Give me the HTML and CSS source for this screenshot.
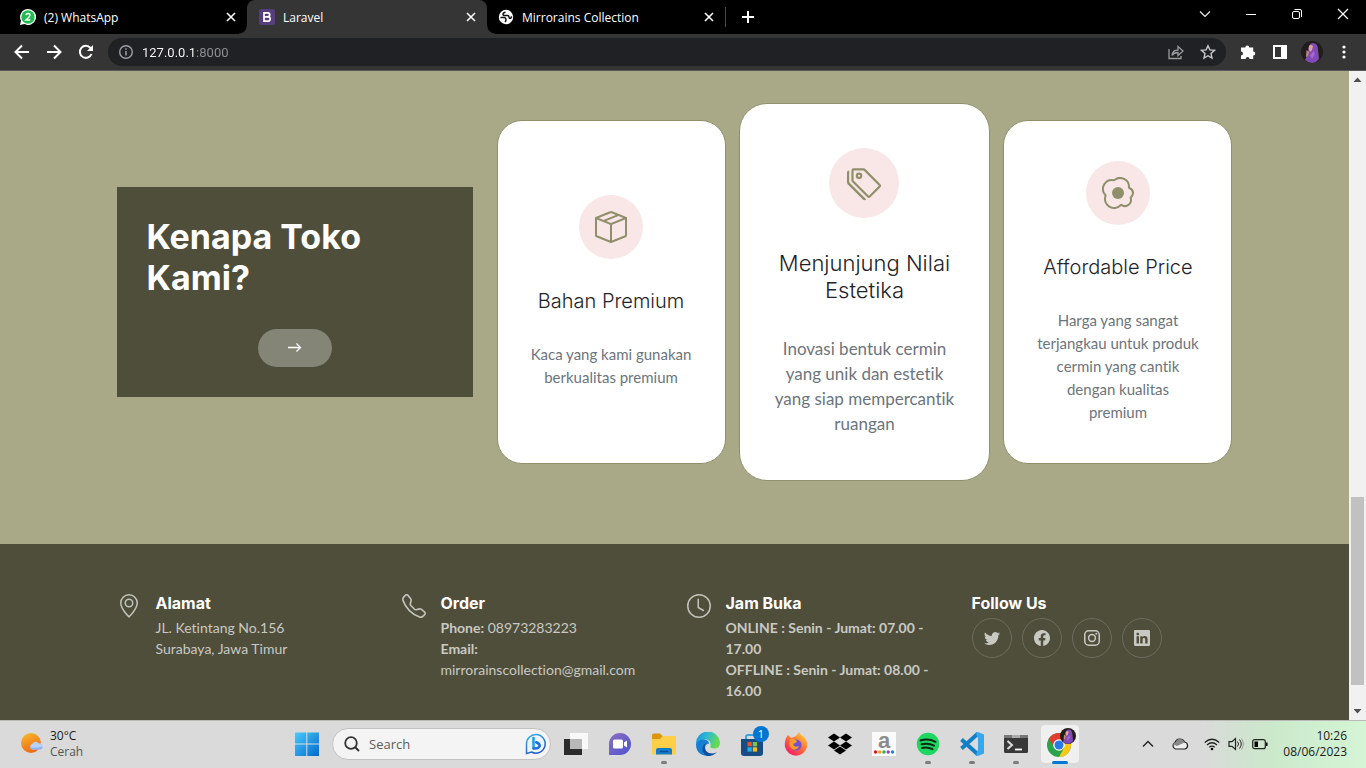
FILE: index.html
```html
<!DOCTYPE html>
<html lang="id">
<head>
<meta charset="utf-8">
<meta name="viewport" content="width=device-width, initial-scale=1">
<title>Laravel</title>
<link rel="stylesheet" href="styles.css">
</head>
<body>
<svg class="defs" width="0" height="0" aria-hidden="true">
  <defs>
    <symbol id="close" viewBox="0 0 16 16"><path d="M4 4l8 8M12 4l-8 8" fill="none" stroke="currentColor" stroke-width="1.6"/></symbol>
    <symbol id="avatar" viewBox="0 0 22 22">
      <circle cx="11" cy="11" r="11" fill="#211d1a"/>
      <path d="M4 19q2-4 3-8 0-9 5-9t5 7l1 9q-3 4-7 4-4 0-7-3z" fill="#8149b3"/>
      <path d="M8 5q2-2 4 0l-1 4-2 2q-2-3-1-6z" fill="#dba892"/>
      <path d="M5.500 9l2.500 2-1 4-2 1z" fill="#c08a78"/>
      <path d="M9 14l4-4 1 3-3 5z" fill="#a467d2"/>
    </symbol>
  </defs>
</svg>

<header class="browser">
  <div class="tabs">
    <div class="tab">
      <svg class="favicon" viewBox="0 0 16 16"><path d="M8 0a8 8 0 1 1-3.6 15.100L0 16l1-4.200A8 8 0 0 1 8 0z" fill="#fff"/><circle cx="8" cy="8" r="6.700" fill="#1fbd51"/><path d="M6 6.200q.3-1.700 2.100-1.700t1.900 1.600q0 1-1.200 2.100L6 11h4.300" fill="none" stroke="#fff" stroke-width="1.500"/></svg>
      <span class="tab-title">(2) WhatsApp</span>
      <button class="icon-btn" aria-label="Close tab"><svg width="16" height="16"><use href="#close"/></svg></button>
    </div>
    <div class="tab tab-active">
      <svg class="favicon" viewBox="0 0 16 16"><rect width="16" height="16" rx="2.500" fill="#563d7c"/><path d="M5 3.800h3.700a2 2 0 0 1 0 4H5h4a2.200 2.200 0 0 1 0 4.400H5z" fill="none" stroke="#fff" stroke-width="1.700"/></svg>
      <span class="tab-title">Laravel</span>
      <button class="icon-btn" aria-label="Close tab"><svg width="16" height="16"><use href="#close"/></svg></button>
    </div>
    <div class="tab">
      <svg class="favicon" viewBox="0 0 16 16"><circle cx="8" cy="8" r="7.200" fill="#fff"/><path d="M7.500 3.200q-2.500.3-2.500 2 0 1.300 2 1.300h2.500q1.500 0 1.500 1.500t1.700 1.300l1-2" fill="none" stroke="#111" stroke-width="1.500"/><path d="M2.500 8.500h4q1.500.3 1.500 2 0 1.500-1 2.500" fill="none" stroke="#111" stroke-width="1.500"/></svg>
      <span class="tab-title">Mirrorains Collection</span>
      <button class="icon-btn" aria-label="Close tab"><svg width="16" height="16"><use href="#close"/></svg></button>
    </div>
    <span class="tab-divider"></span>
    <button class="new-tab" aria-label="New tab"><svg width="16" height="16" viewBox="0 0 16 16"><path d="M8 2v12M2 8h12" stroke="#fff" stroke-width="2"/></svg></button>
    <div class="window-buttons">
      <button aria-label="Search tabs"><svg width="12" height="12" viewBox="0 0 12 12"><path d="M1 3.500l5 5 5-5" fill="none" stroke="#eee" stroke-width="1.200"/></svg></button>
      <button aria-label="Minimize"><svg width="12" height="12" viewBox="0 0 12 12"><path d="M1 6.500h10" stroke="#fff"/></svg></button>
      <button aria-label="Restore"><svg width="12" height="12" viewBox="0 0 12 12"><rect x="1.500" y="3.500" width="7" height="7" rx="1.500" fill="none" stroke="#fff"/><path d="M3.500 1.500H9A1.500 1.500 0 0 1 10.500 3v6" fill="none" stroke="#fff"/></svg></button>
      <button aria-label="Close"><svg width="12" height="12" viewBox="0 0 12 12"><path d="M1 1l10 10M11 1L1 11" stroke="#fff" stroke-width="1.200"/></svg></button>
    </div>
  </div>
  <div class="toolbar">
    <button class="nav-btn" aria-label="Back"><svg width="16" height="16" viewBox="0 0 16 16"><path d="M15 8H2M8 1.500L1.500 8 8 14.500" fill="none" stroke="#fff" stroke-width="2"/></svg></button>
    <button class="nav-btn" aria-label="Forward"><svg width="16" height="16" viewBox="0 0 16 16"><path d="M1 8h13M8 1.500L14.500 8 8 14.500" fill="none" stroke="#fff" stroke-width="2"/></svg></button>
    <button class="nav-btn" aria-label="Reload"><svg width="16" height="16" viewBox="0 0 16 16"><path d="M13.500 10A6 6 0 1 1 12.500 4" fill="none" stroke="#fff" stroke-width="2"/><path d="M15 1v6H9z" fill="#fff"/></svg></button>
    <div class="omnibox">
      <svg width="16" height="16" viewBox="0 0 16 16"><circle cx="8" cy="8" r="6.300" fill="none" stroke="#9aa0a6" stroke-width="1.400"/><path d="M8 7v4.500M8 4.300v1.500" stroke="#9aa0a6" stroke-width="1.500"/></svg>
      <input class="url" type="text" aria-label="Address" value="127.0.0.1:8000">
      <button class="icon-btn" aria-label="Share"><svg width="16" height="16" viewBox="0 0 16 16"><path d="M1 5v9.500h12V12" fill="none" stroke="#9a9b9d" stroke-width="1.300"/><path d="M4 11.500q.5-5.500 6-5.500V2.500L15 7l-5 4.500V8.500q-4 0-6 3z" fill="none" stroke="#9a9b9d" stroke-width="1.300"/></svg></button>
      <button class="icon-btn" aria-label="Bookmark"><svg width="16" height="16" viewBox="0 0 16 16"><path d="M8 1.700l1.900 4.200 4.500.5-3.400 3.100 1 4.500L8 11.700 4 14l1-4.500-3.400-3.100 4.500-.5z" fill="none" stroke="#c6c7c8" stroke-width="1.400"/></svg></button>
    </div>
    <button class="tool-btn" aria-label="Extensions"><svg width="16" height="16" viewBox="0 0 16 16"><path d="M1 3.500h4.300a2 2 0 0 1 4 0h3.900v4a2 2 0 0 1 0 4V15H9.600a2 2 0 0 0-4 0H1v-3.600a2 2 0 0 0 0-4z" fill="#fff"/></svg></button>
    <button class="tool-btn" aria-label="Side panel"><svg width="16" height="16" viewBox="0 0 16 16"><path d="M1 1h14v14H1zM3 3v10h6V3z" fill="#fff" fill-rule="evenodd"/></svg></button>
    <button class="tool-btn" aria-label="Profile"><svg width="22" height="22"><use href="#avatar"/></svg></button>
    <button class="tool-btn" aria-label="Menu"><svg width="16" height="16" viewBox="0 0 16 16"><g fill="#fff"><circle cx="8" cy="3" r="1.600"/><circle cx="8" cy="8" r="1.600"/><circle cx="8" cy="13" r="1.600"/></g></svg></button>
  </div>
</header>

<div class="viewport">
  <div class="page">
    <main class="why">
      <div class="container why-row">
        <section class="why-box">
          <h3>Kenapa Toko Kami?</h3>
          <a class="more-btn" href="#" aria-label="Selengkapnya"><svg width="14" height="14" viewBox="0 0 14 14"><path d="M0 6.500h12M8.500 2.500l4 4-4 4" fill="none" stroke="#fff" stroke-width="1.300"/></svg></a>
        </section>
        <div class="cards">
          <article class="card">
            <span class="card-icon"><svg viewBox="0 0 16 16"><path d="M8.186 1.113a.5.5 0 0 0-.372 0L1.846 3.500l2.404.961L10.404 2l-2.218-.887zm3.564 1.426L5.596 5 8 5.961 14.154 3.500l-2.404-.961zm3.250 1.700-6.500 2.600v7.922l6.500-2.600V4.240zM7.500 14.762V6.838L1 4.239v7.923l6.500 2.600zM7.443.184a1.500 1.500 0 0 1 1.114 0l7.129 2.852A.5.5 0 0 1 16 3.500v8.662a1 1 0 0 1-.629.928l-7.185 2.874a.5.5 0 0 1-.372 0L.63 13.090a1 1 0 0 1-.63-.928V3.500a.5.5 0 0 1 .314-.464L7.443.184z"/></svg></span>
            <h4>Bahan Premium</h4>
            <p>Kaca yang kami gunakan berkualitas premium</p>
          </article>
          <article class="card card-large">
            <span class="card-icon"><svg viewBox="0 0 16 16"><path d="M3 2v4.586l7 7L14.586 9l-7-7H3zM2 2a1 1 0 0 1 1-1h4.586a1 1 0 0 1 .707.293l7 7a1 1 0 0 1 0 1.414l-4.586 4.586a1 1 0 0 1-1.414 0l-7-7A1 1 0 0 1 2 6.586V2z"/><path d="M5.500 5a.5.5 0 1 1 0-1 .5.5 0 0 1 0 1zm0 1a1.500 1.500 0 1 0 0-3 1.500 1.500 0 0 0 0 3zM1 7.086a1 1 0 0 0 .293.707L8.750 15.250l-.043.043a1 1 0 0 1-1.414 0l-7-7A1 1 0 0 1 0 7.586V3a1 1 0 0 1 1-1v5.086z"/></svg></span>
            <h4>Menjunjung Nilai Estetika</h4>
            <p>Inovasi bentuk cermin yang unik dan estetik yang siap mempercantik ruangan</p>
          </article>
          <article class="card">
            <span class="card-icon"><svg viewBox="0 0 16 16"><path d="M8 11a3 3 0 1 0 0-6 3 3 0 0 0 0 6z"/><path d="M13.997 5.170a5 5 0 0 0-8.101-4.090A5 5 0 0 0 1.280 9.342a5 5 0 0 0 8.336 5.109 3.500 3.500 0 0 0 5.201-4.065 3.001 3.001 0 0 0-.822-5.216zm-1-.034a1 1 0 0 0 .668.977 2.001 2.001 0 0 1 .547 3.478 1 1 0 0 0-.341 1.113 2.500 2.500 0 0 1-3.715 2.905 1 1 0 0 0-1.262.152 4 4 0 0 1-6.670-4.087 1 1 0 0 0-.2-1 4 4 0 0 1 3.693-6.610 1 1 0 0 0 .8-.2 4 4 0 0 1 6.480 3.273z"/></svg></span>
            <h4>Affordable Price</h4>
            <p>Harga yang sangat terjangkau untuk produk cermin yang cantik dengan kualitas<br>premium</p>
          </article>
        </div>
      </div>
    </main>
    <footer class="footer">
      <div class="container footer-grid">
        <section class="info">
          <svg class="info-icon" viewBox="0 0 16 16"><path d="M12.166 8.940c-.524 1.062-1.234 2.120-1.960 3.070A31.493 31.493 0 0 1 8 14.580a31.481 31.481 0 0 1-2.206-2.570c-.726-.95-1.436-2.008-1.960-3.070C3.304 7.867 3 6.862 3 6a5 5 0 0 1 10 0c0 .862-.305 1.867-.834 2.940zM8 16s6-5.686 6-10A6 6 0 0 0 2 6c0 4.314 6 10 6 10z"/><path d="M8 8a2 2 0 1 1 0-4 2 2 0 0 1 0 4zm0 1a3 3 0 1 0 0-6 3 3 0 0 0 0 6z"/></svg>
          <div><h4>Alamat</h4><p>JL. Ketintang No.156<br>Surabaya, Jawa Timur</p></div>
        </section>
        <section class="info">
          <svg class="info-icon" viewBox="0 0 16 16"><path d="M3.654 1.328a.678.678 0 0 0-1.015-.063L1.605 2.300c-.483.484-.661 1.169-.45 1.770a17.568 17.568 0 0 0 4.168 6.608 17.569 17.569 0 0 0 6.608 4.168c.601.211 1.286.033 1.770-.45l1.034-1.034a.678.678 0 0 0-.063-1.015l-2.307-1.794a.678.678 0 0 0-.58-.122l-2.190.547a1.745 1.745 0 0 1-1.657-.459L5.482 8.062a1.745 1.745 0 0 1-.46-1.657l.548-2.190a.678.678 0 0 0-.122-.58L3.654 1.328zM1.884.511a1.745 1.745 0 0 1 2.612.163L6.290 2.980c.329.423.445.974.315 1.494l-.547 2.190a.678.678 0 0 0 .178.643l2.457 2.457a.678.678 0 0 0 .644.178l2.189-.547a1.745 1.745 0 0 1 1.494.315l2.306 1.794c.829.645.905 1.870.163 2.611l-1.034 1.034c-.74.74-1.846 1.065-2.877.702a18.634 18.634 0 0 1-7.010-4.420 18.634 18.634 0 0 1-4.420-7.009c-.362-1.030-.037-2.137.703-2.877L1.885.511z"/></svg>
          <div><h4>Order</h4><p><strong>Phone:</strong> 08973283223<br><strong>Email:</strong><br>mirrorainscollection@gmail.com</p></div>
        </section>
        <section class="info">
          <svg class="info-icon" viewBox="0 0 16 16"><path d="M8 3.500a.5.5 0 0 0-1 0V9a.5.5 0 0 0 .252.434l3.500 2a.5.5 0 0 0 .496-.868L8 8.710V3.500z"/><path d="M8 16A8 8 0 1 0 8 0a8 8 0 0 0 0 16zm7-8A7 7 0 1 1 1 8a7 7 0 0 1 14 0z"/></svg>
          <div><h4>Jam Buka</h4><p><strong>ONLINE : Senin - Jumat: 07.00 -<br>17.00<br>OFFLINE : Senin - Jumat: 08.00 -<br>16.00</strong></p></div>
        </section>
        <section>
          <h4>Follow Us</h4>
          <nav class="social">
            <a href="#" aria-label="Twitter"><svg viewBox="0 0 16 16"><path d="M5.026 15c6.038 0 9.341-5.003 9.341-9.334 0-.14 0-.282-.006-.422A6.685 6.685 0 0 0 16 3.542a6.658 6.658 0 0 1-1.889.518 3.301 3.301 0 0 0 1.447-1.817 6.533 6.533 0 0 1-2.087.793A3.286 3.286 0 0 0 7.875 6.030a9.325 9.325 0 0 1-6.767-3.429 3.289 3.289 0 0 0 1.018 4.382A3.323 3.323 0 0 1 .64 6.575v.045a3.288 3.288 0 0 0 2.632 3.218 3.203 3.203 0 0 1-.865.115 3.230 3.230 0 0 1-.614-.057 3.283 3.283 0 0 0 3.067 2.277A6.588 6.588 0 0 1 .78 13.580a6.320 6.320 0 0 1-.78-.045A9.344 9.344 0 0 0 5.026 15z"/></svg></a>
            <a href="#" aria-label="Facebook"><svg viewBox="0 0 16 16"><path d="M16 8.049c0-4.446-3.582-8.050-8-8.050C3.580 0-.002 3.603-.002 8.050c0 4.017 2.926 7.347 6.750 7.951v-5.625h-2.030V8.050H6.750V6.275c0-2.017 1.195-3.131 3.022-3.131.876 0 1.791.157 1.791.157v1.980h-1.009c-.993 0-1.303.621-1.303 1.258v1.510h2.218l-.354 2.326H9.250V16c3.824-.604 6.750-3.934 6.750-7.951z"/></svg></a>
            <a href="#" aria-label="Instagram"><svg viewBox="0 0 16 16"><g fill="none" stroke="currentColor" stroke-width="1.500"><rect x=".75" y=".75" width="14.500" height="14.500" rx="4"/><circle cx="8" cy="8" r="3.400"/></g><circle cx="12.300" cy="3.700" r="1"/></svg></a>
            <a href="#" aria-label="LinkedIn"><svg viewBox="0 0 16 16"><path d="M0 1.146C0 .513.526 0 1.175 0h13.650C15.474 0 16 .513 16 1.146v13.708c0 .633-.526 1.146-1.175 1.146H1.175C.526 16 0 15.487 0 14.854V1.146zm4.943 12.248V6.169H2.542v7.225h2.401zm-1.200-8.212c.837 0 1.358-.554 1.358-1.248-.015-.709-.52-1.248-1.342-1.248-.822 0-1.359.54-1.359 1.248 0 .694.521 1.248 1.327 1.248h.016zm4.908 8.212V9.359c0-.216.016-.432.08-.586.173-.431.568-.878 1.232-.878.869 0 1.216.662 1.216 1.634v3.865h2.401V9.250c0-2.220-1.184-3.252-2.764-3.252-1.274 0-1.845.7-2.165 1.193v.025V6.169h-2.400c.03.678 0 7.225 0 7.225h2.400z"/></svg></a>
          </nav>
        </section>
      </div>
    </footer>
  </div>
  <div class="scrollbar" aria-hidden="true">
    <svg width="17" height="17" viewBox="0 0 17 17"><path d="M4.500 11l4-4.500 4 4.500z" fill="#505050"/></svg>
    <div class="track"><div class="thumb"></div></div>
    <svg width="17" height="17" viewBox="0 0 17 17"><path d="M4.500 6l4 4.500 4-4.500z" fill="#505050"/></svg>
  </div>
</div>

<div class="taskbar">
  <div class="weather">
    <svg width="24" height="24" viewBox="0 0 24 24"><defs><linearGradient id="sun" x2="0.400" y2="1"><stop stop-color="#f6bd2e"/><stop offset="1" stop-color="#f06c12"/></linearGradient></defs><circle cx="11" cy="11" r="10" fill="url(#sun)"/><path d="M12 17.500a3 3 0 0 1 0-5.500 4 4 0 0 1 7-.5 3 3 0 0 1 1.500 6z" fill="#b9d0fb"/><path d="M9.500 15.500q1 2 3 2h8q2.500-1 2-3-2 1.500-13 1z" fill="#8fb2f4"/></svg>
    <div class="weather-text"><span>30°C</span><span class="muted">Cerah</span></div>
  </div>
  <div class="dock">
    <button class="app" aria-label="Start"><svg width="24" height="24" viewBox="0 0 24 24"><defs><linearGradient id="win" gradientUnits="userSpaceOnUse" x1="0" y1="0" x2="24" y2="24"><stop stop-color="#4ccbfb"/><stop offset="1" stop-color="#0169ce"/></linearGradient></defs><path d="M0 .5h11.300v11H0zM12.300.5H24v11H12.300zM0 12.500h11.300V24H0zM12.300 12.500H24V24H12.300z" fill="url(#win)"/></svg></button>
    <label class="search">
      <svg width="18" height="18" viewBox="0 0 18 18"><circle cx="8" cy="8" r="5.800" fill="none" stroke="#333" stroke-width="1.800"/><path d="M12.200 12.200L16 16" stroke="#333" stroke-width="2"/></svg>
      <input type="text" placeholder="Search" aria-label="Search">
      <svg width="22" height="22" viewBox="0 0 22 22"><defs><linearGradient id="bing" x2="0.600" y2="1"><stop stop-color="#38b6ea"/><stop offset="1" stop-color="#1f55bf"/></linearGradient></defs><path d="M11 1.500a9.300 9.300 0 1 1-4.500 17.500L1.500 20.500V11A9.300 9.300 0 0 1 11 1.500z" fill="#eef6fd" stroke="url(#bing)" stroke-width="1.500"/><path d="M8.500 5v10.300" stroke="#25a0e8" stroke-width="2.600" stroke-linecap="round"/><path d="M8.700 15.500q4.500.5 6-2.500.3-2-3.500-3.700" fill="none" stroke="#1f70dc" stroke-width="2.600" stroke-linecap="round"/></svg>
    </label>
    <button class="app" aria-label="Task view"><svg width="24" height="24" viewBox="0 0 24 24"><path d="M0 7h18v16H0z" fill="#2c2c2c"/><path d="M6 1h18v16H6z" fill="#f8f8f8"/><path d="M6 7h12v10H6z" fill="#b8b8b8"/></svg></button>
    <button class="app" aria-label="Chat"><svg width="24" height="24" viewBox="0 0 24 24"><defs><linearGradient id="chat" x2="1" y2="1"><stop stop-color="#8d70c0"/><stop offset="1" stop-color="#4d51d0"/></linearGradient></defs><path d="M12 1a11 11 0 1 1 0 22H1V12A11 11 0 0 1 12 1z" fill="url(#chat)"/><rect x="5" y="7.500" width="10" height="9" rx="1.500" fill="#fff"/><path d="M16 10.500l3-2v7l-3-2z" fill="#fff"/></svg></button>
    <button class="app running" aria-label="File Explorer"><svg width="24" height="24" viewBox="0 0 24 24"><path d="M0 3a1.500 1.500 0 0 1 1.500-1.500H8l2.500 2.500v5H0z" fill="#dd9609"/><path d="M0 7h8l3-3h13v18.500H0z" fill="#fdcf48"/><path d="M4 22.500V18a2 2 0 0 1 2-2h12a2 2 0 0 1 2 2v4.500z" fill="#147bcb"/><path d="M8 19.500h8" stroke="#07509b" stroke-width="1.500"/></svg></button>
    <button class="app" aria-label="Edge"><svg width="24" height="24" viewBox="0 0 24 24"><defs><linearGradient id="edge" x2="1" y2="0.300"><stop stop-color="#1b8fdc"/><stop offset=".5" stop-color="#2fb9d3"/><stop offset="1" stop-color="#66dc50"/></linearGradient></defs><path d="M0 12A12 12 0 0 1 24 11q0 5.500-6 5.500-4.500 0-3.500-2.500 1-5-4-6.500Q4 6.500 0 12z" fill="url(#edge)"/><path d="M0 12Q3 6.500 9 7.500q4 1 4 4-4 .5-4 5 1 5 8 5.500-3 2-6 1.900Q0 23 0 12z" fill="#177fd3"/><path d="M10 11q-3 5 1 9 4 3 10 .3-4 4-9.500 3.600Q6 22 6.500 16 7 12.500 10 11z" fill="#114f9c"/></svg></button>
    <button class="app" aria-label="Microsoft Store"><svg width="30" height="30" viewBox="0 0 30 30"><path d="M9 11V8q0-2 2-2h8q2 0 2 2v3" fill="none" stroke="#39a4df" stroke-width="2"/><path d="M4 10h22v14a3 3 0 0 1-3 3H7a3 3 0 0 1-3-3z" fill="#174d84"/><path d="M10.500 13h4.300v4.300h-4.300z" fill="#f05228"/><path d="M15.800 13h4.300v4.300h-4.300z" fill="#80c244"/><path d="M10.500 18.300h4.300v4.300h-4.300z" fill="#20aeea"/><path d="M15.800 18.300h4.300v4.300h-4.300z" fill="#fcba16"/></svg><span class="badge">1</span></button>
    <button class="app" aria-label="Firefox"><svg width="24" height="24" viewBox="0 0 24 24"><defs><linearGradient id="fox" x1="1" y1="0" x2="0.200" y2="1"><stop stop-color="#ffe33c"/><stop offset=".5" stop-color="#ff7634"/><stop offset="1" stop-color="#f5156c"/></linearGradient></defs><path d="M4 3l3 3 3-1q3-1 5-5 2 4 5 5 4 4 3 10a11.300 11.300 0 0 1-22 0Q0 8 4 3z" fill="url(#fox)"/><circle cx="12" cy="13" r="5.500" fill="#7451d3"/><path d="M6 7q5-1 7 3l-4 2q1 4 6 2-2 5-7 3-4-3-2-10z" fill="#ff9c29"/></svg></button>
    <button class="app" aria-label="Dropbox"><svg width="24" height="24" viewBox="0 0 24 24"><path d="M6 1.500l6 4-6 4-6-4zM18 1.500l6 4-6 4-6-4zM6 9.500l6 4-6 4-6-4zM18 9.500l6 4-6 4-6-4zM12 14.500l6 4-6 4-6-4z"/></svg></button>
    <button class="app" aria-label="Amazon"><span class="amazon"><span class="letter">a</span><svg width="24" height="4" viewBox="0 0 24 4"><circle cx="3.500" cy="2" r="1.700" fill="#e8141c"/><circle cx="7.800" cy="2" r="1.700" fill="#f59a19"/><circle cx="12" cy="2" r="1.700" fill="#3aaa48"/><circle cx="16.200" cy="2" r="1.700" fill="#8b43c9"/><circle cx="20.500" cy="2" r="1.700" fill="#1684e0"/></svg></span></button>
    <button class="app running" aria-label="Spotify"><svg width="24" height="24" viewBox="0 0 24 24"><circle cx="12" cy="12" r="11.200" fill="#1ed760"/><path d="M4.500 8.500q8-2.300 15 1.300M5.500 12.300q7-1.800 12.500 1.300M6 16q5.500-1.300 10.500 1.200" fill="none" stroke="#102616" stroke-width="2" stroke-linecap="round"/></svg></button>
    <button class="app running" aria-label="VS Code"><svg width="24" height="24" viewBox="0 0 24 24"><path d="M1.500 16.500L18 1.500M1.500 7.500L18 22.500" stroke="#137fc7" stroke-width="4"/><path d="M18 0l6 2.500v19L18 24l-2-2 2-4V6l-2-4z" fill="#36a9ee"/></svg></button>
    <button class="app running" aria-label="Terminal"><svg width="24" height="24" viewBox="0 0 24 24"><path d="M0 4.500Q0 3 1.500 3h21Q24 3 24 4.500v15q0 1.500-1.500 1.500h-21Q0 21 0 19.500z" fill="#383838"/><path d="M0 6V3h8v3zM16 6V3h8v3z" fill="#777"/><path d="M8 3h8v3H8z" fill="#aaa"/><path d="M3.500 9l4.500 4-4.500 4" fill="none" stroke="#ddd" stroke-width="2"/><path d="M11 17.500h7" stroke="#fff" stroke-width="1.800"/></svg></button>
    <button class="app active" aria-label="Chrome"><svg width="32" height="32" viewBox="0 0 32 32"><circle cx="15" cy="17" r="12" fill="#2ba24c"/><path d="M4.600 11A12 12 0 0 1 25.400 11L15 12 11 20z" fill="#e33b2e"/><path d="M25.400 11A12 12 0 0 1 15 29l5-9-2-9z" fill="#fdc814"/><circle cx="15" cy="17" r="5.800" fill="#fff"/><circle cx="15" cy="17" r="4.500" fill="#267be9"/><svg x="16" width="16" height="16"><use href="#avatar"/></svg></svg></button>
  </div>
  <div class="tray">
    <svg width="12" height="12" viewBox="0 0 12 12"><path d="M1 8.500l5-5 5 5" fill="none" stroke="#222" stroke-width="1.400"/></svg>
    <svg class="cloud" width="18" height="16" viewBox="0 0 18 16"><path d="M4.500 13a3.500 3.500 0 0 1-.5-6.500 5.200 5.200 0 0 1 9.500-.5 3.600 3.600 0 0 1 .5 7z" fill="#eee" stroke="#222" stroke-width="1.200"/><path d="M2 8.500Q2 6.500 4.500 6.500 6 2.500 9 3q3.500 0 4.500 3.500L6 10z" fill="#888"/></svg>
    <svg width="16" height="16" viewBox="0 0 16 16"><g fill="none" stroke="#222" stroke-width="1.200"><path d="M.7 6.500q7.300-6.500 14.600 0M3 9q5-4.500 10 0M5.300 11.300q2.700-2.500 5.400 0"/></g><circle cx="8" cy="13" r="1.300"/></svg>
    <svg width="16" height="16" viewBox="0 0 16 16"><path d="M1 5.700h3L7.500 2.500v11L4 10.300H1z" fill="none" stroke="#222" stroke-width="1.200"/><path d="M9.500 5.500q2 2.500 0 5M11.500 3.500q3.500 4.500 0 9" fill="none" stroke="#222"/><path d="M13.500 2.500q3.500 5.500 0 11" fill="none" stroke="#999"/></svg>
    <svg width="16" height="16" viewBox="0 0 16 16"><rect x=".7" y="3.700" width="12.600" height="9" rx="2" fill="none" stroke="#222" stroke-width="1.200"/><path d="M2.500 5.500H6V11H2.500zM14 6.500h1.500v3.500H14z"/></svg>
    <div class="clock"><span>10:26</span><span>08/06/2023</span></div>
  </div>
</div>
</body>
</html>
```
FILE: styles.css
```css
* { box-sizing: border-box; }

body {
  margin: 0;
  height: 100vh;
  display: flex;
  flex-direction: column;
  overflow: hidden;
  font-family: "Open Sans", "Noto Sans", sans-serif;
}

h3, h4, p { margin: 0; }
svg { display: block; flex: none; }
.defs { position: absolute; }

button {
  display: flex;
  align-items: center;
  justify-content: center;
  padding: 0;
  border: 0;
  background: none;
  color: inherit;
  font: inherit;
}

/* Browser frame */
.browser { background: #353535; color: #fff; border-bottom: 1px solid #5a5a58; }
.tabs { display: flex; height: 34px; background: #000; }
.tab {
  display: flex;
  align-items: center;
  gap: 8px;
  width: 240px;
  padding: 0 8px 0 12px;
  font-size: 12px;
}
.tab:first-child { width: 247px; padding-left: 20px; }
.tab:nth-child(3) { width: 238px; padding-left: 11px; }
.tab-active { position: relative; background: #353535; border-radius: 8px 8px 0 0; }
.tab-active::before,
.tab-active::after {
  content: "";
  position: absolute;
  bottom: 0;
  width: 8px;
  height: 8px;
}
.tab-active::before { right: 100%; background: radial-gradient(circle at 0 0, #000 7px, #353535 8px); }
.tab-active::after { left: 100%; background: radial-gradient(circle at 100% 0, #000 7px, #353535 8px); }
.tab-title { flex: 1; white-space: nowrap; }
.favicon { width: 16px; height: 16px; }
.tab-divider { align-self: center; width: 1px; height: 20px; background: #4a4a4a; }
.new-tab { width: 44px; }
.window-buttons { display: flex; margin-left: auto; height: 28px; }
.window-buttons button { width: 46px; }

.toolbar { display: flex; align-items: center; height: 36px; padding: 0 6px; }
.nav-btn, .tool-btn { width: 32px; height: 32px; }
.omnibox {
  display: flex;
  align-items: center;
  gap: 8px;
  flex: 1;
  height: 28px;
  margin: 0 6px;
  padding: 0 10px;
  border-radius: 14px;
  background: #202124;
}
.omnibox .icon-btn { margin-left: 8px; }
.url {
  flex: 1;
  min-width: 0;
  padding: 0;
  border: 0;
  outline: 0;
  font: 13px Roboto, sans-serif;
  color: transparent;
  background: linear-gradient(90deg, #fff 53px, #8f9194 53px);
  background-clip: text;
  -webkit-background-clip: text;
}

/* Page area */
.viewport { display: flex; flex: 1; min-height: 0; }
.page {
  display: flex;
  flex-direction: column;
  flex: 1;
  min-width: 0;
  overflow: hidden;
  background: #4e4e3b;
  font-family: Lato, sans-serif;
  font-variant-ligatures: none;
}
.container { width: 100%; max-width: 1116px; margin: 0 auto; }
.why { padding: 32px 0 63px; background: #a9a988; }
.why-row { display: grid; grid-template-columns: 356px 1fr; gap: 24px; align-items: center; }
.why-box {
  display: flex;
  flex-direction: column;
  align-items: center;
  gap: 31px;
  padding: 29px 30px 30px;
  background: #4e4e3b;
  color: #fff;
}
.why-box h3 { align-self: stretch; font: 700 34px/41px Inter, sans-serif; }
.more-btn {
  display: flex;
  align-items: center;
  justify-content: center;
  width: 74px;
  height: 38px;
  border-radius: 19px;
  background: #848477;
}

.cards { display: grid; grid-template-columns: 10fr 11fr 10fr; gap: 13px; }
.card {
  display: flex;
  flex-direction: column;
  align-items: center;
  justify-content: center;
  gap: 30px;
  margin: 17px 0;
  padding: 30px;
  border: 1px solid #8f8f6b;
  border-radius: 25px;
  background: #fff;
  text-align: center;
}
.card-icon {
  display: flex;
  align-items: center;
  justify-content: center;
  width: 64px;
  height: 64px;
  border-radius: 50%;
  background: #f9e7e7;
  fill: #8f8f6b;
}
.card-icon svg { width: 32px; height: 32px; }
.card h4 { font: 300 20px/24px Inter, sans-serif; color: #1e2428; }
.card p { font-size: 15px; line-height: 23px; color: #6c757d; }
.card-large { gap: 32px; margin: 0; padding: 44px 30px; border-radius: 28px; }
.card-large .card-icon { width: 70px; height: 70px; }
.card-large .card-icon svg { width: 35px; height: 35px; }
.card-large h4 { font-size: 22px; line-height: 27px; }
.card-large p { font-size: 17px; line-height: 25px; }

.footer { padding-top: 49px; color: #c9c9c4; }
.footer-grid { display: grid; grid-template-columns: repeat(3, 285px) 1fr; }
.info { display: flex; gap: 15px; }
.info-icon { width: 24px; height: 24px; margin-top: 1px; fill: #c3c3bd; }
.footer h4 { font: 700 16px/20px Inter, sans-serif; color: #fff; }
.footer p { margin-top: 4px; font-size: 14px; line-height: 21px; }
.social { display: flex; gap: 10px; margin-top: 5px; }
.social a {
  display: flex;
  align-items: center;
  justify-content: center;
  width: 40px;
  height: 40px;
  border: 1px solid #6d6d5e;
  border-radius: 50%;
  color: #c9c9c4;
  fill: currentColor;
}
.social svg { width: 16px; height: 16px; }

.scrollbar { display: flex; flex-direction: column; width: 17px; background: #f1f1f1; }
.track { display: flex; flex: 1; flex-direction: column; justify-content: flex-end; padding: 0 2px 18px; }
.thumb { height: 31.5%; background: #c1c1c1; }

/* Taskbar */
.taskbar {
  display: grid;
  grid-template-columns: 1fr auto 1fr;
  align-items: center;
  height: 48px;
  padding-bottom: 1px;
  border-top: 1px solid #b9b9b5;
  background: linear-gradient(90deg, #dadada 88%, #cbe8cb 93%, #d5f5d6 100%);
  font-size: 12px;
  color: #1b1b1b;
}
.weather { display: flex; align-items: center; gap: 6px; padding-left: 20px; }
.weather-text, .clock { display: flex; flex-direction: column; line-height: 16px; }
.muted { color: #555; }
.dock { display: flex; align-items: center; padding-left: 1px; }
.app { position: relative; width: 44px; height: 46px; }
.search {
  display: flex;
  align-items: center;
  gap: 8px;
  width: 219px;
  height: 32px;
  margin: 0 3px;
  padding: 0 3px 0 10px;
  border: 1px solid #c2c2c2;
  border-radius: 16px;
  background: #f4f4f4;
}
.search input {
  flex: 1;
  min-width: 0;
  padding: 0;
  border: 0;
  outline: 0;
  background: none;
  font: 13px "Open Sans", sans-serif;
}
.search input::placeholder { color: #5c5c5c; }
.running::after, .active::after {
  content: "";
  position: absolute;
  bottom: 3px;
  left: 50%;
  width: 6px;
  height: 3px;
  margin-left: -3px;
  border-radius: 2px;
  background: #7c7c7c;
}
.active::before {
  content: "";
  position: absolute;
  inset: 4px 3px;
  border-radius: 4px;
  background: #f0f0f0;
}
.active svg { position: relative; }
.active::after { width: 16px; margin-left: -8px; background: #0078d4; }
.badge {
  position: absolute;
  top: 5px;
  right: 5px;
  width: 16px;
  height: 16px;
  border-radius: 50%;
  background: #0275d3;
  color: #fff;
  font-size: 11px;
  line-height: 16px;
}
.amazon {
  display: flex;
  flex-direction: column;
  align-items: center;
  width: 24px;
  height: 24px;
  background: #fafafa;
}
.letter { font: 700 22px/18px "Liberation Sans", sans-serif; color: #8c8c8c; }
.tray { display: flex; align-items: center; justify-content: flex-end; gap: 8px; padding-right: 19px; }
.cloud { margin: 0 7px 0 9px; }
.clock { margin-left: 7px; text-align: right; }
```
